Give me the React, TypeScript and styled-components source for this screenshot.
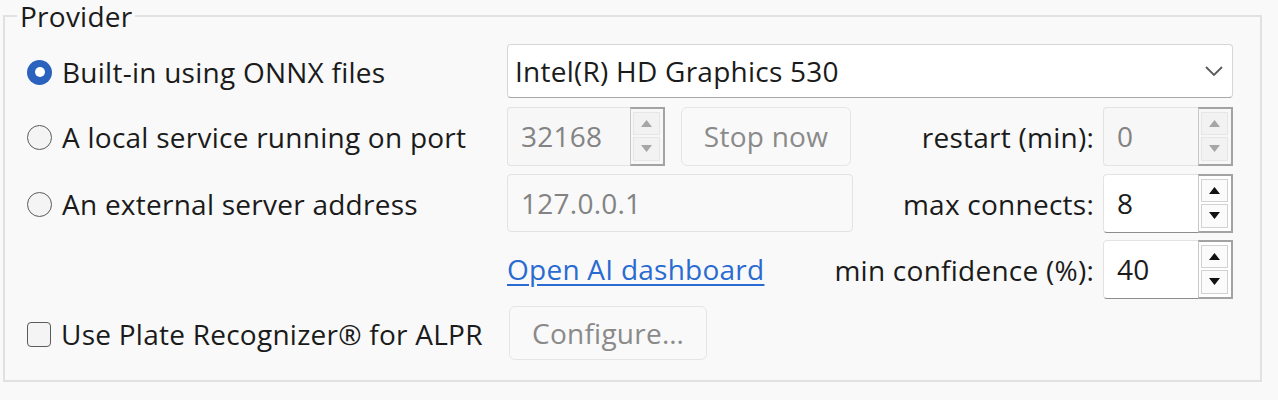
import { createGlobalStyle } from "styled-components";
import styled from "styled-components";

const GlobalStyle = createGlobalStyle`
  html, body {
    margin: 0;
    padding: 0;
    background: #f9f9f9;
  }
  body {
    font-family: "Open Sans", "Noto Sans", sans-serif;
    color: #1b1b1b;
    letter-spacing: 0.25px;
  }
`;

const Frame = styled.fieldset`
  box-sizing: border-box;
  width: 1259px;
  height: 382px;
  margin: 0 0 0 3px;
  padding: 12px 25px 0 22px;
  border: 2px solid #e1e1e1;
  border-radius: 0;
`;

const Legend = styled.legend`
  font-size: 28px;
  line-height: 32px;
  padding: 0 3px;
  margin-left: -10px;
  color: #1b1b1b;
`;

const Grid = styled.div`
  display: grid;
  grid-template-columns: 480px 346px 250px 130px;
  grid-template-rows: 54px 60px 58px 58px 54px;
  row-gap: 8px;
  align-items: center;
  font-size: 28px;
  line-height: 36px;
`;

const Option = styled.label`
  display: flex;
  align-items: center;
  gap: 10px;
  white-space: nowrap;
  padding-top: 2px;
`;

const Radio = styled.span<{ $checked?: boolean }>`
  box-sizing: border-box;
  width: 25px;
  height: 25px;
  border-radius: 50%;
  flex: none;
  display: flex;
  align-items: center;
  justify-content: center;
  background: ${(p) => (p.$checked ? "#2a62bd" : "#f4f4f4")};
  border: ${(p) => (p.$checked ? "none" : "1.5px solid #5b5b5b")};
  &::after {
    content: "";
    display: ${(p) => (p.$checked ? "block" : "none")};
    width: 10px;
    height: 10px;
    border-radius: 50%;
    background: #fff;
  }
`;

const Check = styled.span`
  box-sizing: border-box;
  width: 24px;
  height: 25px;
  border-radius: 4px;
  border: 1.5px solid #5b5b5b;
  background: #f4f4f4;
  flex: none;
`;

const Select = styled.div`
  grid-column: 2 / 5;
  box-sizing: border-box;
  height: 54px;
  display: flex;
  align-items: center;
  justify-content: space-between;
  padding: 0 8px 0 7px;
  background: #fff;
  border: 1px solid #d6d6d6;
  border-bottom-color: #a8a8a8;
  border-radius: 4px;
`;

const Chevron = styled.svg`
  width: 20px;
  height: 12px;
`;

const Cell = styled.div<{ $span?: number }>`
  display: flex;
  align-items: center;
  gap: 16px;
  grid-column: ${(p) => (p.$span ? `span ${p.$span}` : "auto")};
`;

const RightLabel = styled.div`
  justify-self: end;
  padding-right: 9px;
  padding-top: 2px;
  white-space: nowrap;
`;

const SpinBox = styled.div<{ $w: number; $disabled?: boolean }>`
  box-sizing: border-box;
  width: ${(p) => p.$w}px;
  height: 59px;
  display: flex;
  background: ${(p) => (p.$disabled ? "#f7f7f7" : "#fff")};
`;

const SpinField = styled.div<{ $disabled?: boolean }>`
  flex: 1;
  display: flex;
  align-items: center;
  padding-left: 13px;
  border: 1px solid #e3e3e3;
  border-right: none;
  border-bottom: 1px solid ${(p) => (p.$disabled ? "#e3e3e3" : "#8d8d8d")};
  border-radius: 4px 0 0 4px;
  color: ${(p) => (p.$disabled ? "#838383" : "#1b1b1b")};
`;

const Arrows = styled.div`
  box-sizing: border-box;
  width: 35px;
  display: flex;
  flex-direction: column;
  gap: 2px;
  padding: 3px 3px 3px 2px;
  border: 2px solid #a3a3a3;
  border-left: 1px solid #c8c8c8;
`;

const ArrowButton = styled.div<{ $disabled?: boolean }>`
  flex: 1;
  display: flex;
  align-items: center;
  justify-content: center;
  border: 1px solid ${(p) => (p.$disabled ? "#e6e6e6" : "#d2d2d2")};
  background: ${(p) => (p.$disabled ? "#f2f2f2" : "#fbfbfb")};
`;

const TextBox = styled.div`
  box-sizing: border-box;
  width: 346px;
  height: 58px;
  display: flex;
  align-items: center;
  padding-left: 13px;
  border: 1px solid #e3e3e3;
  border-radius: 4px;
  background: #f9f9f9;
  color: #838383;
`;

const Button = styled.div<{ $w: number; $h: number; $offset?: number }>`
  box-sizing: border-box;
  width: ${(p) => p.$w}px;
  height: ${(p) => p.$h}px;
  margin-left: ${(p) => p.$offset ?? 0}px;
  display: flex;
  align-items: center;
  justify-content: center;
  border: 1px solid #e5e5e5;
  border-radius: 6px;
  background: #f9f9f9;
  color: #8a8a8a;
`;

const Link = styled.a`
  color: #2a6bd1;
  text-decoration: underline;
  text-underline-offset: 4px;
  cursor: pointer;
`;

function Spin({ value, width, disabled }: { value: string; width: number; disabled?: boolean }) {
  const fill = disabled ? "#a6a6a6" : "#111";
  return (
    <SpinBox $w={width} $disabled={disabled}>
      <SpinField $disabled={disabled}>{value}</SpinField>
      <Arrows>
        <ArrowButton $disabled={disabled}>
          <svg width="11" height="7" viewBox="0 0 11 7">
            <polygon points="0,7 5.5,0 11,7" fill={fill} />
          </svg>
        </ArrowButton>
        <ArrowButton $disabled={disabled}>
          <svg width="11" height="7" viewBox="0 0 11 7">
            <polygon points="0,0 11,0 5.5,7" fill={fill} />
          </svg>
        </ArrowButton>
      </Arrows>
    </SpinBox>
  );
}

export default function App() {
  return (
    <>
      <GlobalStyle />
      <Frame>
        <Legend>Provider</Legend>
        <Grid>
          <Option>
            <Radio $checked />
            Built-in using ONNX files
          </Option>
          <Select>
            <span>Intel(R) HD Graphics 530</span>
            <Chevron viewBox="0 0 20 12">
              <polyline points="2,2 10,10 18,2" fill="none" stroke="#5a5a5a" strokeWidth="1.8" />
            </Chevron>
          </Select>

          <Option>
            <Radio />
            A local service running on port
          </Option>
          <Cell>
            <Spin value="32168" width={158} disabled />
            <Button $w={170} $h={59}>Stop now</Button>
          </Cell>
          <RightLabel>restart (min):</RightLabel>
          <Spin value="0" width={130} disabled />

          <Option>
            <Radio />
            An external server address
          </Option>
          <TextBox>127.0.0.1</TextBox>
          <RightLabel>max connects:</RightLabel>
          <Spin value="8" width={130} />

          <div />
          <Cell>
            <Link>Open AI dashboard</Link>
          </Cell>
          <RightLabel>min confidence (%):</RightLabel>
          <Spin value="40" width={130} />

          <Option>
            <Check />
            Use Plate Recognizer® for ALPR
          </Option>
          <Cell $span={3}>
            <Button $w={198} $h={54} $offset={2}>Configure…</Button>
          </Cell>
        </Grid>
      </Frame>
    </>
  );
}
